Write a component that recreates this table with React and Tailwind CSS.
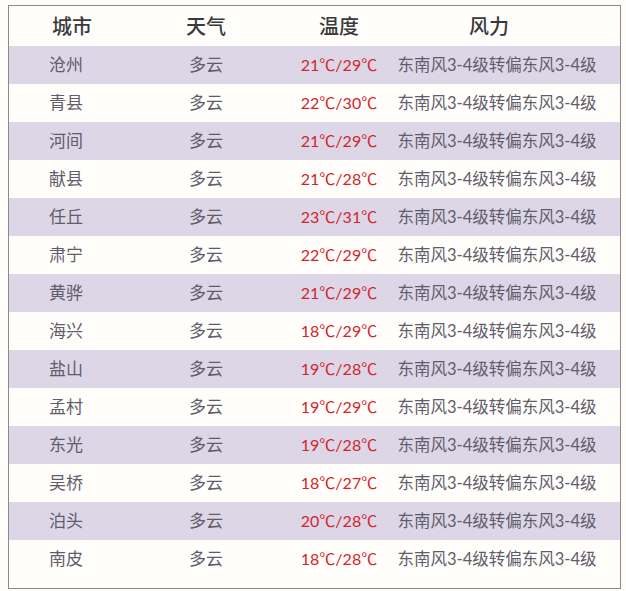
import React from "react";

const rows = [
  ["沧州", "21℃/29℃"],
  ["青县", "22℃/30℃"],
  ["河间", "21℃/29℃"],
  ["献县", "21℃/28℃"],
  ["任丘", "23℃/31℃"],
  ["肃宁", "22℃/29℃"],
  ["黄骅", "21℃/29℃"],
  ["海兴", "18℃/29℃"],
  ["盐山", "19℃/28℃"],
  ["孟村", "19℃/29℃"],
  ["东光", "19℃/28℃"],
  ["吴桥", "18℃/27℃"],
  ["泊头", "20℃/28℃"],
  ["南皮", "18℃/28℃"],
];

const font = { fontFamily: '"Lato", "Noto Sans CJK SC", sans-serif' };

export default function App() {
  return (
    <div className="w-[626px] h-[591px] bg-[#fffefb]">
      <div className="ml-[8px] pt-[5px]">
        <div
          className="w-[613px] h-[584px] border border-[#8a8a8a] bg-[#fffefb] flex flex-col"
          style={font}
        >
          <div className="grid grid-cols-[114px_166px_100px_216px] h-[40px] items-center text-[20px] text-[#3a3a3a] font-medium">
            <div className="text-center pl-[12px]">城市</div>
            <div className="text-center">天气</div>
            <div className="text-center">温度</div>
            <div className="text-center pr-[16px]">风力</div>
          </div>
          {rows.map(([city, temp], i) => (
            <div
              key={city}
              className={
                "grid grid-cols-[114px_166px_100px_216px] h-[38px] items-center text-[17px] text-[#5f5d6b] " +
                (i % 2 === 0 ? "bg-[#dcd6e7]" : "bg-[#fffefb]")
              }
            >
              <div className="text-center">{city}</div>
              <div className="text-center">多云</div>
              <div className="text-center text-[16px] text-[#d4242b] whitespace-nowrap">{temp}</div>
              <div className="text-center text-[16.5px] whitespace-nowrap">东南风3-4级转偏东风3-4级</div>
            </div>
          ))}
        </div>
      </div>
    </div>
  );
}
